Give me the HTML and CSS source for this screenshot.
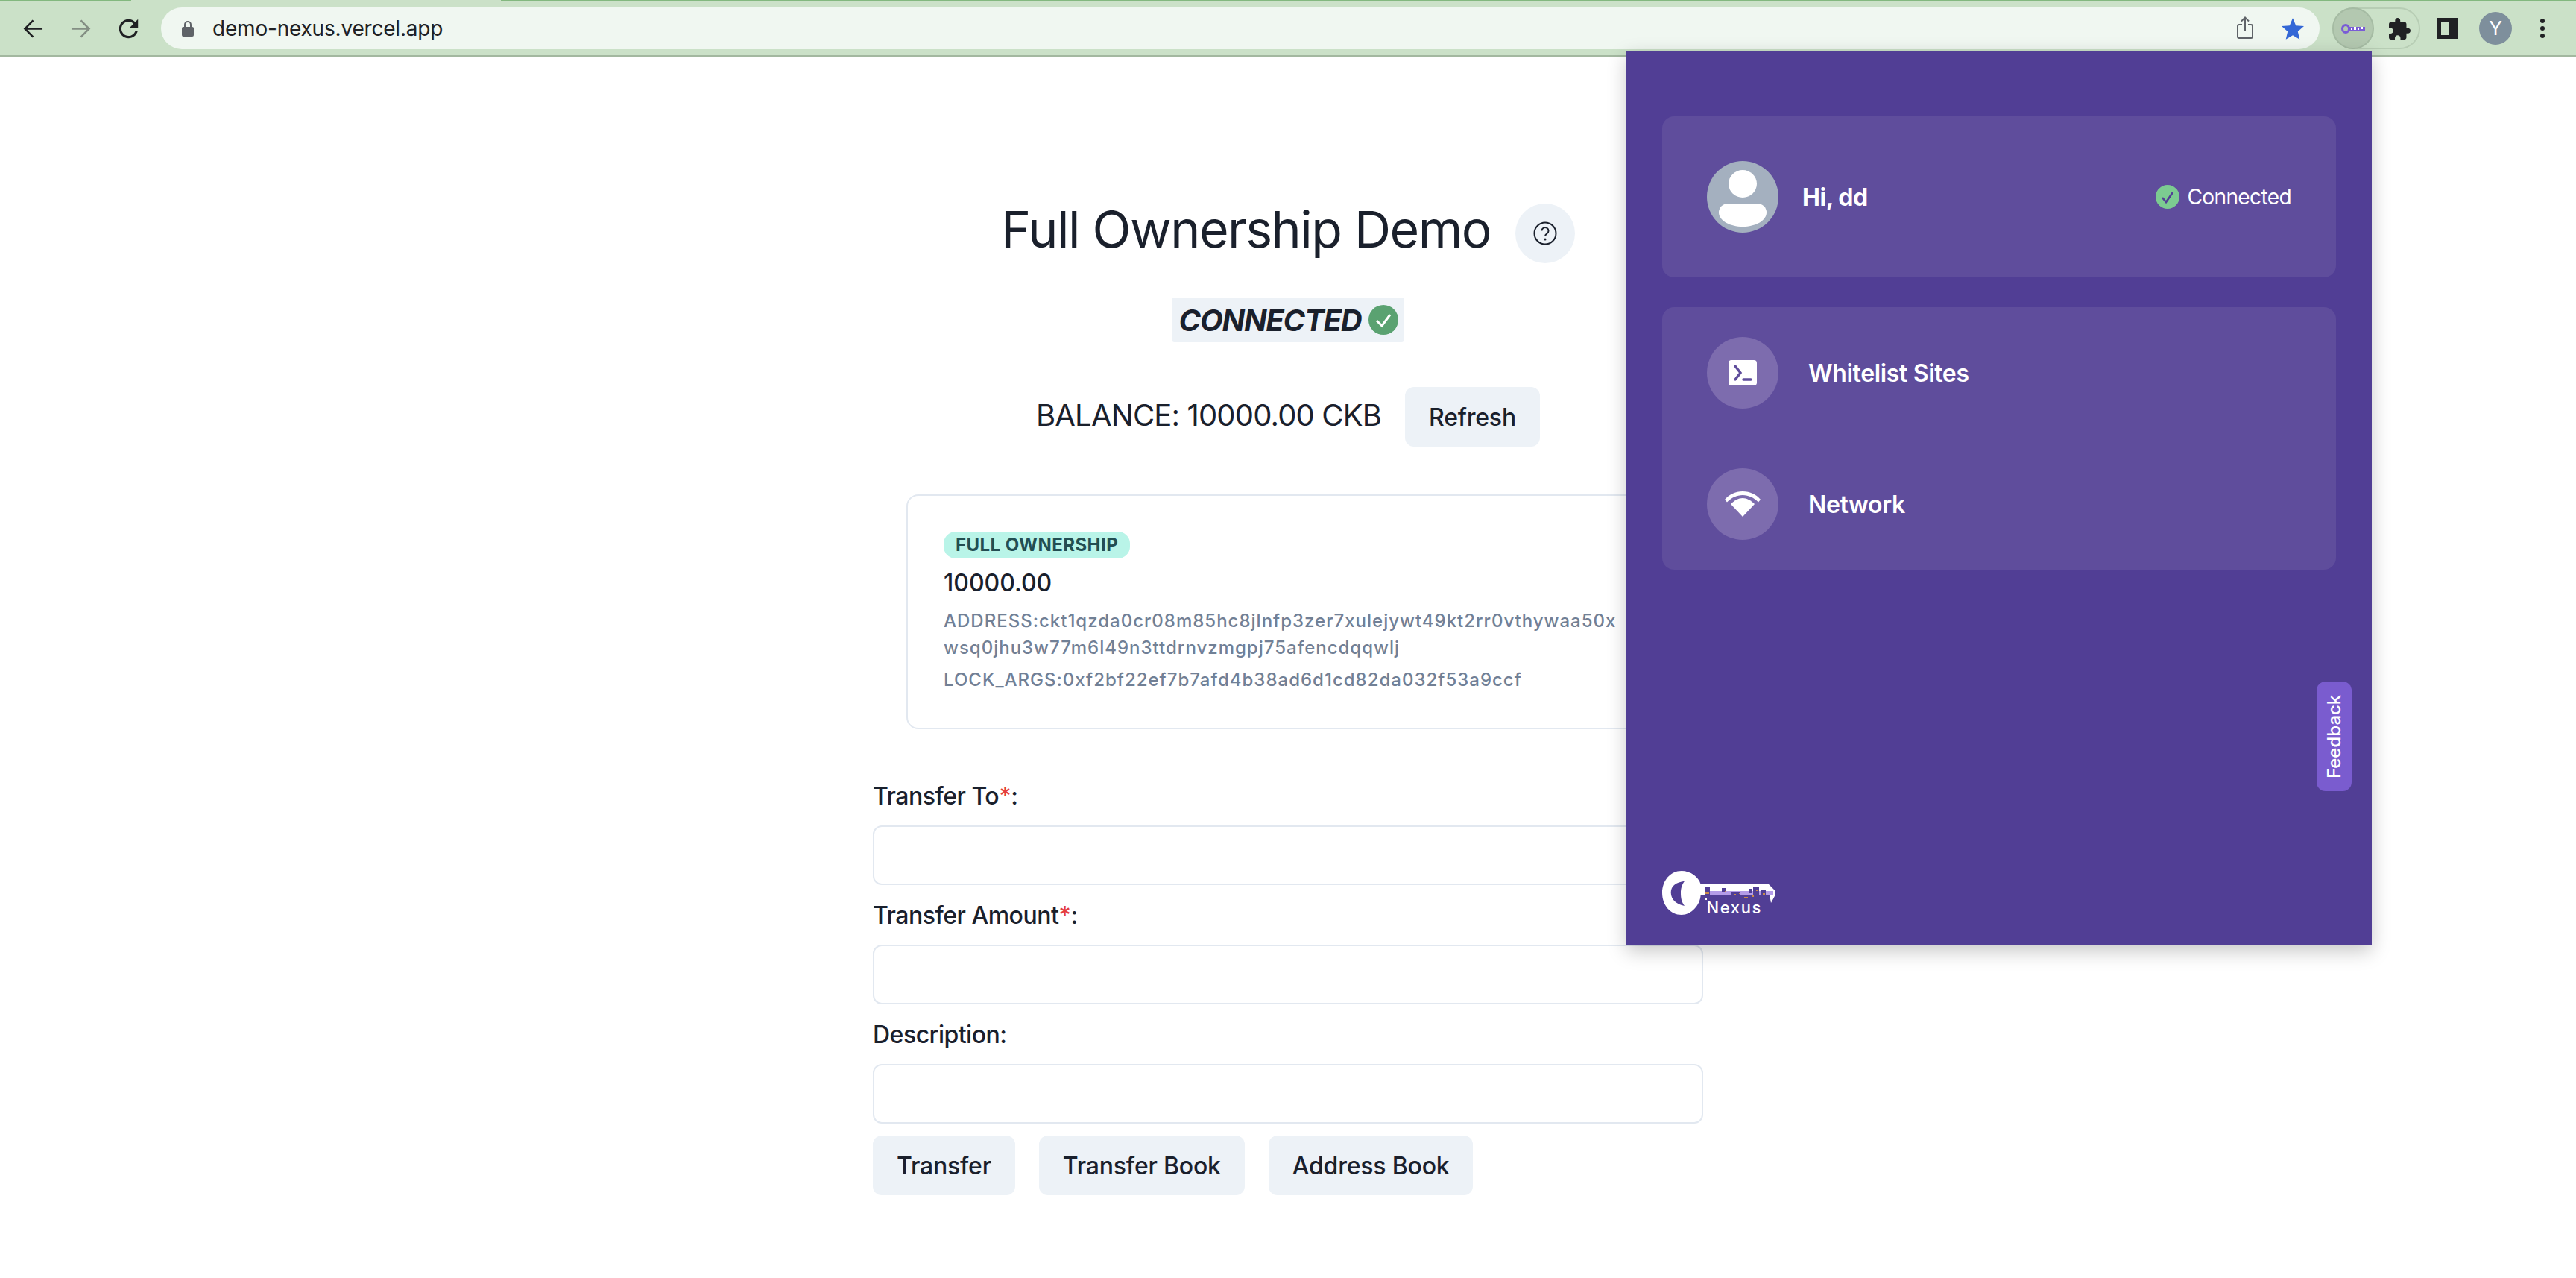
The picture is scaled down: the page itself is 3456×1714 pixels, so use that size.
FILE: index.html
```html
<!DOCTYPE html>
<html lang="en">
<head>
<meta charset="utf-8">
<title>Full Ownership Demo</title>
<link rel="stylesheet" href="styles.css">
</head>
<body>
<header class="chrome">
  <div class="tabstrip"><span class="tab"></span></div>
  <div class="toolbar">
    <span class="slot"><svg class="ico-nav" viewBox="0 0 28 28"><path d="M27 14H3M14 2.500 2.500 14 14 25.500" fill="none" stroke="#202124" stroke-width="2.600"/></svg></span>
    <span class="slot"><svg class="ico-nav" viewBox="0 0 28 28"><path d="M1 14h24M14 2.500 25.500 14 14 25.500" fill="none" stroke="#848f84" stroke-width="2.600"/></svg></span>
    <span class="slot"><svg class="ico-reload" viewBox="3.500 3.500 17 17"><path fill="#202124" d="M17.650 6.350C16.200 4.900 14.210 4 12 4c-4.420 0-7.990 3.580-7.990 8s3.570 8 7.990 8c3.730 0 6.840-2.550 7.730-6h-2.080c-.82 2.330-3.040 4-5.650 4-3.310 0-6-2.690-6-6s2.690-6 6-6c1.660 0 3.140.69 4.220 1.780L13 11h7V4l-2.350 2.350z"/></svg></span>
    <div class="omnibox">
      <svg class="ico-lock" viewBox="0 0 16 22"><path d="M4 10V6a4 4 0 0 1 8 0v4" fill="none" stroke="#5f6368" stroke-width="2"/><rect x="0" y="9" width="16" height="13" rx="2" fill="#5f6368"/></svg>
      <span class="url">demo-nexus.vercel.app</span>
      <span class="slot slot-first"><svg class="ico-share" viewBox="0 0 22 30"><path d="M7 11H3a2 2 0 0 0-2 2v14a2 2 0 0 0 2 2h16a2 2 0 0 0 2-2V13a2 2 0 0 0-2-2h-4M11 20V2M6 6.500 11 1.500l5 5" fill="none" stroke="#5f6368" stroke-width="2"/></svg></span>
      <span class="slot"><svg class="ico-star" viewBox="2 2 20 19"><path fill="#3367d6" d="M12 17.270 18.180 21l-1.640-7.030L22 9.240l-7.190-.61L12 2 9.190 8.630 2 9.240l5.460 4.730L5.820 21z"/></svg></span>
    </div>
    <div class="ext-pill">
      <span class="ext-active">
        <svg class="ico-minikey" viewBox="0 0 32 13"><ellipse cx="6" cy="6.500" rx="4.500" ry="5" fill="none" stroke="#7a5cd6" stroke-width="3"/><rect x="11" y="4" width="21" height="5" fill="#7a5cd6"/><path fill="#fff" d="M13 5h2v3h-2zM17 4h3v4h-3zM22 5h2v3h-2zM26 4h3v3h-3z"/></svg>
      </span>
      <svg class="ico-puzzle" viewBox="2 1 21 21"><path fill="#202124" d="M20.500 11H19V7c0-1.100-.9-2-2-2h-4V3.500C13 2.120 11.880 1 10.500 1S8 2.120 8 3.500V5H4c-1.100 0-1.990.9-1.990 2v3.800H3.500c1.490 0 2.700 1.210 2.700 2.700s-1.210 2.700-2.700 2.700H2V20c0 1.100.9 2 2 2h3.800v-1.500c0-1.490 1.210-2.700 2.700-2.700 1.490 0 2.700 1.210 2.700 2.700V22H17c1.100 0 2-.9 2-2v-4h1.500c1.380 0 2.500-1.120 2.500-2.500S21.880 11 20.500 11z"/></svg>
    </div>
    <span class="slot slot-panel"><svg class="ico-panel" viewBox="0 0 28 28"><path fill="#202124" fill-rule="evenodd" d="M0 0h28v28H0zM5 5v18h11V5z"/></svg></span>
    <span class="profile">Y</span>
    <span class="slot slot-menu"><svg class="ico-dots" viewBox="0 0 6 26"><circle cx="3" cy="3" r="3" fill="#202124"/><circle cx="3" cy="13" r="3" fill="#202124"/><circle cx="3" cy="23" r="3" fill="#202124"/></svg></span>
  </div>
</header>

<main class="page">
  <div class="title-row">
    <h1 class="title">Full Ownership Demo</h1>
    <button class="help" type="button" aria-label="Help">
      <svg class="ico-help" viewBox="0 0 32 32"><circle cx="16" cy="16" r="14.500" fill="none" stroke="#1a202c" stroke-width="2"/><path d="M11.500 12.500a4.500 4.500 0 1 1 6.800 3.900c-1.500.9-2.300 1.800-2.300 3.400" fill="none" stroke="#1a202c" stroke-width="2"/><circle cx="16" cy="24" r="1.500" fill="#1a202c"/></svg>
    </button>
  </div>
  <div class="status">
    <em class="status-text">CONNECTED</em>
    <svg class="ico-status" viewBox="0 0 40 40"><circle cx="20" cy="20" r="20" fill="#5aa271"/><path d="M11 21l7 7 11-15" fill="none" stroke="#fff" stroke-width="3"/></svg>
  </div>
  <div class="balance-row">
    <p class="balance">BALANCE: 10000.00 CKB</p>
    <button class="btn" type="button">Refresh</button>
  </div>
  <section class="cell">
    <span class="badge">FULL OWNERSHIP</span>
    <p class="amount">10000.00</p>
    <p class="meta meta-address">ADDRESS:ckt1qzda0cr08m85hc8jlnfp3zer7xulejywt49kt2rr0vthywaa50xwsq0jhu3w77m6l49n3ttdrnvzmgpj75afencdqqwlj</p>
    <p class="meta meta-args">LOCK_ARGS:0xf2bf22ef7b7afd4b38ad6d1cd82da032f53a9ccf</p>
  </section>
  <form class="form">
    <label class="label">Transfer To<span class="req">*</span>:</label>
    <input class="input" type="text">
    <label class="label">Transfer Amount<span class="req">*</span>:</label>
    <input class="input" type="text">
    <label class="label">Description:</label>
    <input class="input" type="text">
    <div class="actions">
      <button class="btn" type="button">Transfer</button>
      <button class="btn" type="button">Transfer Book</button>
      <button class="btn" type="button">Address Book</button>
    </div>
  </form>
</main>

<aside class="popup">
  <div class="panel panel-user">
    <span class="avatar">
      <svg class="ico-user" viewBox="0 0 64 76"><ellipse cx="32" cy="18.500" rx="19" ry="18.500" fill="#fff"/><path d="M12 45h40a12 12 0 0 1 12 12c0 11-15 19-32 19S0 68 0 57a12 12 0 0 1 12-12z" fill="#fff"/></svg>
    </span>
    <span class="hi">Hi, dd</span>
    <span class="conn">
      <svg class="ico-conn" viewBox="0 0 32 32"><circle cx="16" cy="16" r="16" fill="#7ccb91"/><path d="M9 17l5 6 9-13" fill="none" stroke="#513e95" stroke-width="2.600"/></svg>
      Connected
    </span>
  </div>
  <div class="panel panel-menu">
    <div class="menu-item">
      <span class="menu-icon">
        <svg class="ico-term" viewBox="0 0 38 34"><rect width="38" height="34" rx="4" fill="#fff"/><path d="M9 8l7 9-7 9" fill="none" stroke="#5f4d9c" stroke-width="3.400" stroke-linecap="round"/><path d="M20 26h10" stroke="#5f4d9c" stroke-width="3.400" stroke-linecap="round"/></svg>
      </span>
      <span class="menu-text">Whitelist Sites</span>
    </div>
    <div class="menu-item">
      <span class="menu-icon">
        <svg class="ico-wifi" viewBox="0 0 48 34"><path d="M0 11C6 4 14 0 24 0s18 4 24 11l-3 3.500C39 8.500 32 5 24 5S9 8.500 3 14.500z" fill="#fff"/><path d="M8 17c5-5 10.500-8 16-8s11 3 16 8L24 34z" fill="#fff"/></svg>
      </span>
      <span class="menu-text">Network</span>
    </div>
  </div>
  <button class="feedback" type="button">Feedback</button>
  <svg class="logo" viewBox="0 0 152 67" role="img" aria-label="Nexus">
    <path fill-rule="evenodd" fill="#fff" d="M26 0c12 0 23 8 25.700 18H143l9 9v5l-6 11-2-11H60v7h-2v-7H51.700C51 46 39 59 26 59 11 59 0 46 0 29.500S11 0 26 0zM30 13.700C19 15 11.700 20 11.700 29c0 10 8 16 18.300 18-4-5-5-11-5-17s1-11 5-16.300z"/>
    <rect x="57" y="27" width="92" height="5" fill="#b49ce8"/>
    <path fill="#513e95" d="M57 22h7v14h-7zM80 23h6v5h-6zM93 28h12v8H93zM117 24h4v5h-4zM122 22h8v10h-8zM133 26h6v8h-6zM67 32h6v9h-6zM108 32h10v8h-10z"/>
    <path fill="#c98a4a" d="M58 28h5v3h-5zM84 27h2v1h-2zM96 31h3v2h-3zM103 30h2v1h-2zM121 33h2v2h-2zM126 26h2v1h-2zM135 30h3v2h-3zM71 36h2v1h-2zM110 35h5v1h-5z"/>
    <text class="logo-text" x="59.500" y="57">Nexus</text>
  </svg>
</aside>
</body>
</html>
```

FILE: styles.css
```css
* { box-sizing: border-box; }
html, body { margin: 0; padding: 0; background: #fff; }
body {
  width: 3456px;
  height: 1714px;
  overflow: hidden;
  position: relative;
  font-family: Inter, "Liberation Sans", sans-serif;
  color: #1a202c;
}
p, h1 { margin: 0; }
button { font-family: inherit; color: inherit; border: 0; padding: 0; }

/* browser chrome */
.chrome { height: 76px; background: #cbe1c8; border-bottom: 2px solid #a3b8a0; }
.tabstrip { height: 2px; background: #83b87f; display: flex; }
.tab { width: 496px; margin-left: 176px; background: #cbe1c8; }
.toolbar { height: 72px; display: flex; align-items: center; padding: 0 13px 0 12px; }
.slot { width: 64px; height: 56px; display: flex; align-items: center; justify-content: center; flex: none; }
.slot-first { margin-left: auto; }
.ico-nav { width: 27px; height: 27px; }
.ico-reload { width: 27px; height: 27px; }
.omnibox {
  flex: 1;
  height: 56px;
  margin-left: 12px;
  padding: 0 4px 0 28px;
  border-radius: 28px;
  background: #f0f7f1;
  display: flex;
  align-items: center;
}
.ico-lock { width: 16px; height: 22px; flex: none; }
.url { margin-left: 25px; font-size: 28px; letter-spacing: -0.2px; color: #202124; white-space: nowrap; }
.ico-share { width: 22px; height: 30px; margin-top: -2px; }
.ico-star { width: 30px; height: 29px; }
.ext-pill {
  width: 118px;
  height: 56px;
  margin-left: 17px;
  border: 2px solid #b7cdb4;
  border-radius: 28px;
  display: flex;
  align-items: center;
  flex: none;
}
.ext-active {
  width: 56px;
  height: 56px;
  margin-left: -2px;
  border: 2px solid #a5bba3;
  border-radius: 50%;
  background: #b3c8b0;
  display: flex;
  align-items: center;
  justify-content: center;
  flex: none;
}
.ico-minikey { width: 32px; height: 13px; }
.ico-puzzle { width: 29px; height: 29px; margin-left: 20px; }
.slot-panel { margin-left: 5px; }
.ico-panel { width: 28px; height: 28px; }
.profile {
  width: 44px;
  height: 44px;
  margin-left: 10px;
  border-radius: 50%;
  background: #7e8f9c;
  color: #fff;
  font-size: 26px;
  line-height: 44px;
  text-align: center;
  flex: none;
}
.slot-menu { margin-left: 9px; }
.ico-dots { width: 6px; height: 26px; }

/* page */
.page { width: 1114px; margin: 0 auto; padding-top: 197px; display: flex; flex-direction: column; align-items: center; }
.title-row { display: flex; align-items: flex-start; gap: 33px; height: 80px; }
.title { font-size: 68px; font-weight: 400; line-height: 68px; letter-spacing: -1.5px; white-space: nowrap; }
.help { width: 80px; height: 80px; border-radius: 50%; background: #edf2f7; display: flex; align-items: center; justify-content: center; }
.ico-help { width: 32px; height: 32px; }
.status {
  margin-top: 46px;
  height: 60px;
  padding: 0 8px 0 10px;
  background: #edf2f7;
  border-radius: 4px;
  display: flex;
  align-items: center;
  gap: 10px;
}
.status-text { font-size: 40px; font-weight: 700; font-style: italic; letter-spacing: -1.2px; }
.ico-status { width: 40px; height: 40px; }
.balance-row { margin-top: 60px; display: flex; align-items: center; gap: 32px; }
.balance { font-size: 40px; line-height: 60px; margin-top: -5px; letter-spacing: -0.85px; }
.btn { height: 80px; padding: 0 32px; border-radius: 12px; background: #edf2f7; font-size: 32px; font-weight: 500; letter-spacing: -0.2px; white-space: nowrap; }
.cell {
  width: 1024px;
  height: 315px;
  margin-top: 64px;
  padding: 48px 48px 0;
  border: 2px solid #e2e8f0;
  border-radius: 16px;
}
.badge {
  display: inline-block;
  height: 36px;
  padding: 0 16px;
  border-radius: 16px;
  background: #b9f4e8;
  color: #234e52;
  font-size: 24px;
  font-weight: 700;
  line-height: 36px;
  letter-spacing: 0.45px;
  vertical-align: top;
}
.amount { margin-top: 9px; font-size: 32px; font-weight: 500; line-height: 48px; }
.meta { font-size: 24px; font-weight: 500; line-height: 36px; color: #718096; letter-spacing: 1px; }
.meta-address { margin-top: 9px; word-break: break-all; width: 912px; }
.meta-args { margin-top: 7px; }
.form { width: 100%; margin-top: 66px; display: flex; flex-direction: column; }
.label { display: block; height: 48px; margin-bottom: 15px; font-size: 32px; font-weight: 450; line-height: 48px; letter-spacing: -0.5px; }
.req { color: #e53e3e; }
.input { display: block; width: 100%; height: 80px; margin-bottom: 17px; border: 2px solid #e2e8f0; border-radius: 12px; background: #fff; }
.actions { display: flex; gap: 32px; margin-top: -1px; }

/* extension popup */
.popup {
  position: absolute;
  left: 2182px;
  top: 68px;
  width: 1000px;
  height: 1200px;
  padding: 88px 48px 33px;
  background: #513e95;
  color: #fff;
  box-shadow: 0 8px 24px rgba(0, 0, 0, .22);
  display: flex;
  flex-direction: column;
}
.panel { border-radius: 16px; background: #5f4d9c; padding: 0 60px; }
.panel-user { height: 216px; display: flex; align-items: center; }
.panel-menu { margin-top: 40px; padding-top: 40px; padding-bottom: 40px; display: flex; flex-direction: column; gap: 80px; }
.avatar { width: 96px; height: 96px; border-radius: 50%; background: #a4b0bf; display: flex; justify-content: center; padding-top: 12px; flex: none; }
.ico-user { width: 64px; height: 76px; }
.hi { margin-left: 32px; font-size: 32px; font-weight: 700; letter-spacing: -0.4px; }
.conn { margin-left: auto; display: flex; align-items: center; gap: 10px; font-size: 28px; font-weight: 400; letter-spacing: -0.6px; }
.ico-conn { width: 32px; height: 32px; }
.menu-item { display: flex; align-items: center; gap: 40px; }
.menu-icon { width: 96px; height: 96px; border-radius: 50%; background: #7d6cae; display: flex; align-items: center; justify-content: center; }
.ico-term { width: 38px; height: 34px; }
.ico-wifi { width: 48px; height: 34px; }
.menu-text { font-size: 32px; font-weight: 600; letter-spacing: -0.35px; }
.feedback {
  position: absolute;
  right: 27px;
  top: 846px;
  width: 47px;
  height: 147px;
  border-radius: 12px;
  background: #7a5ccf;
  color: #fff;
  font-size: 24px;
  font-weight: 500;
  writing-mode: vertical-rl;
  transform: rotate(180deg);
  text-align: center;
}
.logo { width: 152px; height: 67px; margin-top: auto; flex: none; }
.logo-text { font-family: Inter, "Liberation Sans", sans-serif; font-size: 22px; font-weight: 500; letter-spacing: 1.6px; fill: #fff; }
```
